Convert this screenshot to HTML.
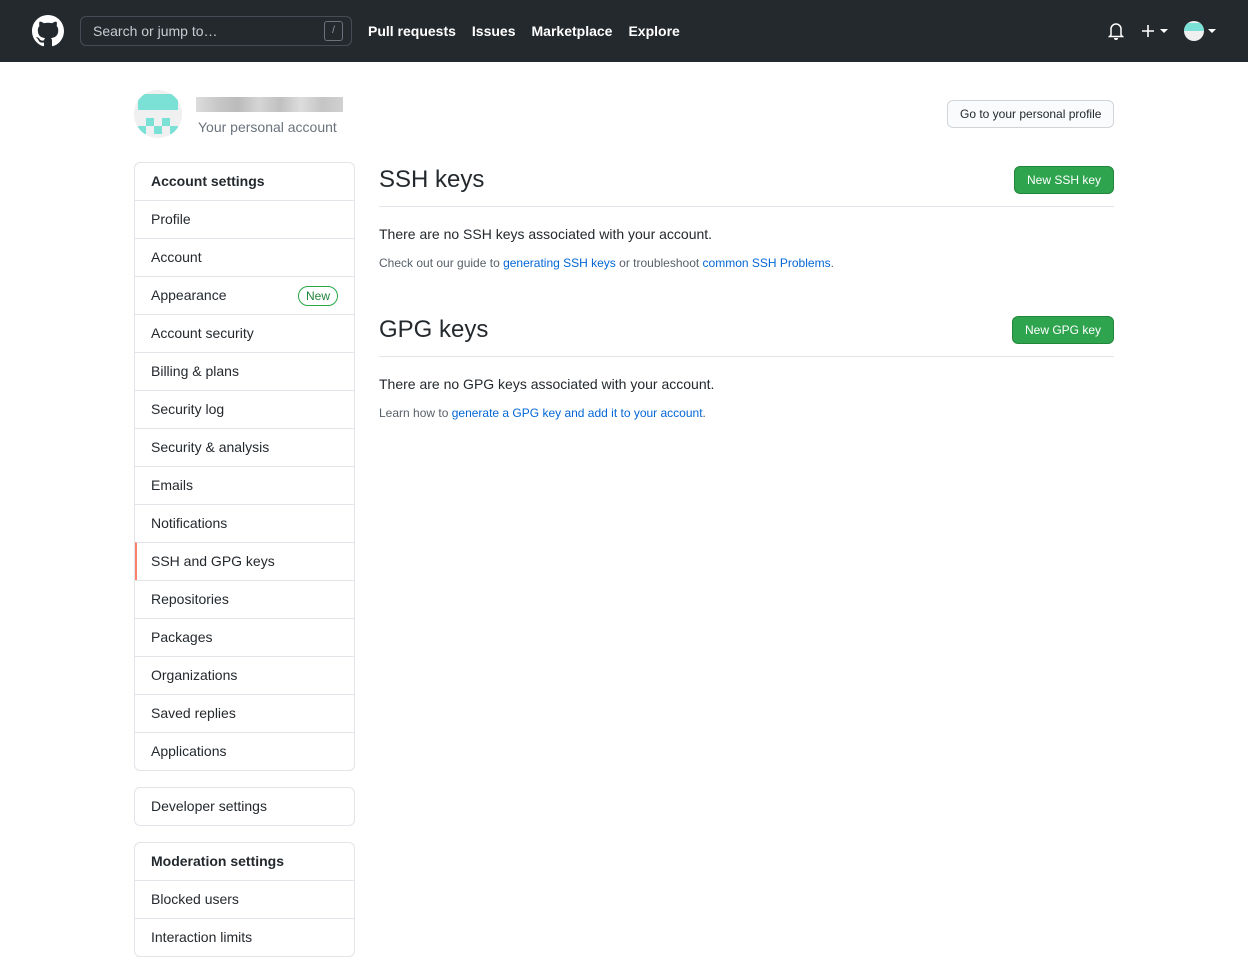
<!DOCTYPE html>
<html><head><meta charset="utf-8"><style>
*{box-sizing:border-box;margin:0;padding:0}
body{width:1248px;height:964px;overflow:hidden;font-family:"Liberation Sans",sans-serif;color:#24292e;background:#fff;font-size:14px}
.hd{height:62px;background:#24292e;position:relative}
.hd>*{position:absolute}
.search{left:80px;top:16px;width:272px;height:30px;border:1px solid #444d56;border-radius:6px;color:#c8ccd1;font-size:14px;line-height:28px;padding-left:12px}
.slash{position:absolute;right:8px;top:4px;width:19px;height:20px;border:1px solid #6a737d;border-radius:3px;font-size:10px;line-height:18px;text-align:center;color:#959da5}
.nav{left:368px;top:23px;color:#fff;font-weight:bold;font-size:14px}
.nav span{margin-right:16px}
.box{position:absolute;left:134px;width:221px;border:1px solid #e1e4e8;border-radius:6px}
.row{height:38px;line-height:37px;padding-left:16px;border-top:1px solid #e1e4e8;position:relative}
.row:first-child{border-top:none;height:37px;line-height:37px}
.b{font-weight:bold}
.sel{border-left:2px solid #f9826c;padding-left:14px}
.new{position:absolute;right:16px;top:9px;height:20px;line-height:18px;border:1px solid #28a745;color:#22863a;border-radius:10px;padding:0 7px;font-size:12px}
a{color:#0366d6;text-decoration:none}
.h2{position:absolute;left:379px;font-size:24px;font-weight:normal}
.line{position:absolute;left:379px;width:735px;border-top:1px solid #e1e4e8}
.btn{position:absolute;height:28px;line-height:26px;font-size:12px;border-radius:6px;padding:0 12px}
.g{background:#2ea44f;color:#fff;border:1px solid #22863a}
.t{position:absolute;left:379px}
</style></head><body>
<div class="hd">
<svg style="left:32px;top:15px" width="32" height="32" viewBox="0 0 16 16"><path fill="#fff" d="M8 0C3.58 0 0 3.58 0 8c0 3.54 2.29 6.53 5.47 7.59.4.07.55-.17.55-.38 0-.19-.01-.82-.01-1.49-2.01.37-2.530-.49-2.69-.94-.09-.23-.48-.94-.82-1.13-.28-.15-.68-.52-.01-.53.63-.01 1.08.58 1.23.82.72 1.21 1.87.87 2.33.66.07-.52.28-.87.51-1.07-1.78-.2-3.64-.89-3.64-3.95 0-.87.31-1.59.82-2.15-.08-.2-.36-1.02.08-2.12 0 0 .67-.21 2.2.82.64-.18 1.32-.27 2-.27.68 0 1.36.09 2 .27 1.53-1.04 2.2-.82 2.2-.82.44 1.1.16 1.92.08 2.12.51.56.82 1.27.82 2.15 0 3.07-1.87 3.75-3.65 3.95.29.25.54.73.54 1.48 0 1.07-.01 1.93-.01 2.2 0 .21.15.46.55.38A8.013 8.013 0 0016 8c0-4.42-3.58-8-8-8z"/></svg>
<div class="search">Search or jump to…<div class="slash">/</div></div>
<div class="nav"><span>Pull requests</span><span>Issues</span><span>Marketplace</span><span>Explore</span></div>
<svg style="left:1108px;top:22px" width="16" height="18" viewBox="0 0 16 18"><path fill="none" stroke="#fff" stroke-width="1.5" d="M3 13V7a5 5 0 0110 0v6l1.5 1.5h-13z"/><path fill="#fff" d="M6 16h4a2 2 0 01-4 0z"/></svg>
<svg style="left:1141px;top:24px" width="14" height="14" viewBox="0 0 14 14"><path stroke="#fff" stroke-width="1.6" d="M7 1v12M1 7h12"/></svg>
<div style="left:1160px;top:29px;border:4px solid transparent;border-top-color:#fff"></div>
<div style="left:1184px;top:21px;width:20px;height:20px;border-radius:50%;background:#f0f0f0;overflow:hidden"><div style="height:8px;background:#7be0d6;margin-top:2px"></div></div>
<div style="left:1208px;top:29px;border:4px solid transparent;border-top-color:#fff"></div>
</div>
<div style="position:absolute;left:134px;top:90px;width:48px;height:48px;border-radius:50%;background:#f0f0f0;overflow:hidden">
<div style="position:absolute;left:4px;top:4px;width:40px;height:16px;background:#7be0d6;border-radius:6px 6px 0 0"></div>
<div style="position:absolute;left:12px;top:28px;width:8px;height:8px;background:#7be0d6"></div>
<div style="position:absolute;left:28px;top:28px;width:8px;height:8px;background:#7be0d6"></div>
<div style="position:absolute;left:20px;top:36px;width:8px;height:8px;background:#7be0d6"></div>
<div style="position:absolute;left:4px;top:36px;width:8px;height:8px;background:#7be0d6"></div>
<div style="position:absolute;left:36px;top:36px;width:8px;height:8px;background:#7be0d6"></div>
</div>
<div style="position:absolute;left:196px;top:97px;width:147px;height:15px;background:linear-gradient(90deg,#ddd,#c8c8c8,#bbb,#d5d5d5,#c0c0c0,#ddd,#c5c5c5,#d0d0d0)"></div>
<div style="position:absolute;left:198px;top:119px;color:#6a737d;font-size:14px">Your personal account</div>
<div class="btn" style="left:947px;top:100px;border:1px solid #d1d5da;background:#fafbfc;color:#24292e">Go to your personal profile</div>
<div class="box" style="top:162px">
<div class="row b">Account settings</div><div class="row">Profile</div><div class="row">Account</div>
<div class="row">Appearance<span class="new">New</span></div>
<div class="row">Account security</div><div class="row">Billing &amp; plans</div><div class="row">Security log</div><div class="row">Security &amp; analysis</div><div class="row">Emails</div><div class="row">Notifications</div>
<div class="row sel">SSH and GPG keys</div><div class="row">Repositories</div><div class="row">Packages</div><div class="row">Organizations</div><div class="row">Saved replies</div><div class="row">Applications</div>
</div>
<div class="box" style="top:787px"><div class="row">Developer settings</div></div>
<div class="box" style="top:842px"><div class="row b">Moderation settings</div><div class="row">Blocked users</div><div class="row">Interaction limits</div></div>
<div class="h2" style="top:166px">SSH keys</div>
<div class="btn g" style="left:1014px;top:166px">New SSH key</div>
<div class="line" style="top:206px"></div>
<div class="t" style="top:226px">There are no SSH keys associated with your account.</div>
<div class="t" style="top:256px;font-size:12px;color:#586069">Check out our guide to <a>generating SSH keys</a> or troubleshoot <a>common SSH Problems</a>.</div>
<div class="h2" style="top:316px">GPG keys</div>
<div class="btn g" style="left:1012px;top:316px">New GPG key</div>
<div class="line" style="top:356px"></div>
<div class="t" style="top:376px">There are no GPG keys associated with your account.</div>
<div class="t" style="top:406px;font-size:12px;color:#586069">Learn how to <a>generate a GPG key and add it to your account</a>.</div>
</body></html>
